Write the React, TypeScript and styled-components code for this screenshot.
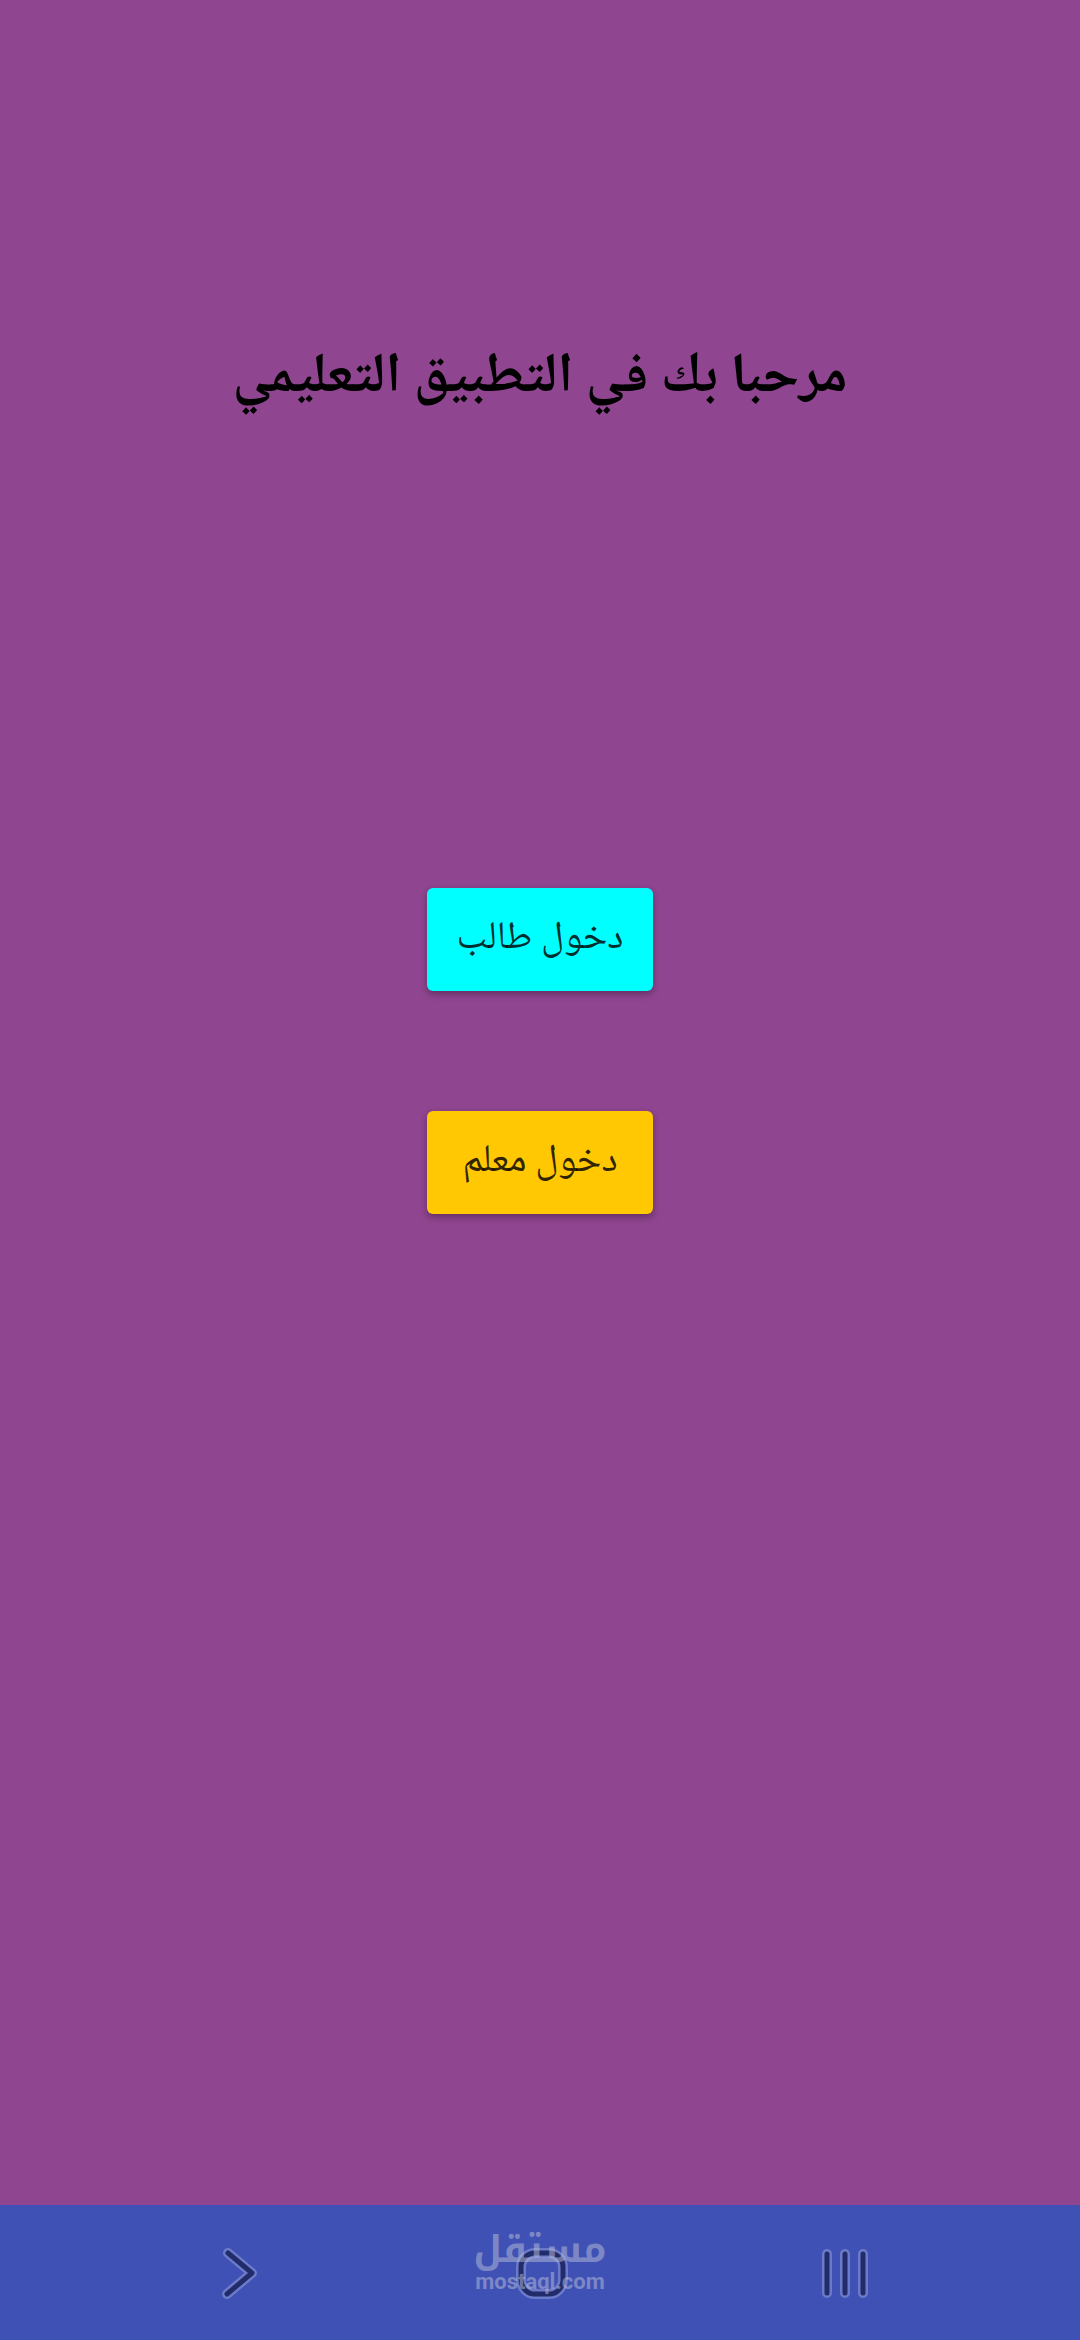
import React from "react";
import styled, { createGlobalStyle } from "styled-components";

const GlobalStyle = createGlobalStyle`
  * { box-sizing: border-box; }
  body {
    margin: 0;
    background: #8f458f;
    font-family: "Noto Naskh Arabic UI", "Noto Naskh Arabic", "DejaVu Sans", sans-serif;
  }
`;

const Screen = styled.div`
  display: flex;
  flex-direction: column;
  min-height: 100vh;
  background: #8f458f;
`;

const Main = styled.main`
  flex: 1;
  display: flex;
  flex-direction: column;
  align-items: center;
  padding: 337px 24px 48px;
`;

const Title = styled.h1`
  margin: 0;
  color: #000;
  font-size: 56px;
  font-weight: 700;
  line-height: 80px;
  text-align: center;
`;

const Actions = styled.div`
  display: flex;
  flex-direction: column;
  gap: 120px;
  margin-top: 471px;
`;

const EntryButton = styled.button<{ $color: string }>`
  min-width: 226px;
  height: 103px;
  padding: 0 28px 4px;
  border: 0;
  border-radius: 6px;
  background: ${(p) => p.$color};
  box-shadow: 0 3px 7px rgba(0, 0, 0, 0.32);
  color: rgba(0, 0, 0, 0.82);
  font-family: inherit;
  font-size: 39px;
  line-height: 60px;
  cursor: pointer;
`;

const NavBar = styled.nav`
  position: relative;
  display: flex;
  justify-content: center;
  height: 135px;
  padding: 0 84px 0 88px;
  background: #3f51b5;
`;

const NavButton = styled.button`
  flex: 1;
  display: flex;
  align-items: center;
  justify-content: center;
  padding: 0;
  border: 0;
  background: transparent;
  cursor: pointer;
`;

const Watermark = styled.div`
  position: absolute;
  left: 50%;
  top: 25px;
  display: flex;
  flex-direction: column;
  align-items: center;
  transform: translateX(-50%);
  color: #b9bdd8;
  opacity: 0.5;
  pointer-events: none;
`;

const WatermarkName = styled.span`
  font-family: "Noto Kufi Arabic", "DejaVu Sans", sans-serif;
  font-size: 37px;
  font-weight: 700;
  line-height: 40px;
`;

const WatermarkSite = styled.span`
  font-family: Roboto, sans-serif;
  font-size: 22px;
  font-weight: 700;
  line-height: 24px;
`;

const LIGHT = "#6c7bc9";
const DARK = "#232c6b";

function BackIcon() {
  const d = "M13 10 L37 30 L12 51";
  return (
    <svg width="48" height="60" viewBox="0 0 48 60" fill="none" strokeLinecap="round" strokeLinejoin="round" aria-hidden="true">
      <path d={d} stroke={LIGHT} strokeWidth="10" />
      <path d={d} stroke={DARK} strokeWidth="5" />
    </svg>
  );
}

function HomeIcon() {
  return (
    <svg width="60" height="60" viewBox="0 0 60 60" fill="none" aria-hidden="true">
      <rect x="9" y="10" width="42" height="41" rx="14" stroke={LIGHT} strokeWidth="10" />
      <rect x="9" y="10" width="42" height="41" rx="14" stroke={DARK} strokeWidth="5" />
    </svg>
  );
}

function RecentsIcon() {
  const d = "M12 11 V50 M30 11 V50 M48 11 V50";
  return (
    <svg width="60" height="60" viewBox="0 0 60 60" fill="none" strokeLinecap="round" aria-hidden="true">
      <path d={d} stroke={LIGHT} strokeWidth="10" />
      <path d={d} stroke={DARK} strokeWidth="5" />
    </svg>
  );
}

export default function App() {
  return (
    <Screen>
      <GlobalStyle />
      <Main dir="rtl" lang="ar">
        <Title>مرحبا بك في التطبيق التعليمي</Title>
        <Actions>
          <EntryButton type="button" $color="#00ffff">دخول طالب</EntryButton>
          <EntryButton type="button" $color="#ffc803">دخول معلم</EntryButton>
        </Actions>
      </Main>
      <NavBar>
        <NavButton type="button" aria-label="رجوع"><BackIcon /></NavButton>
        <NavButton type="button" aria-label="الرئيسية"><HomeIcon /></NavButton>
        <NavButton type="button" aria-label="التطبيقات الأخيرة"><RecentsIcon /></NavButton>
        <Watermark>
          <WatermarkName lang="ar" dir="rtl">مستقل</WatermarkName>
          <WatermarkSite>mostaql.com</WatermarkSite>
        </Watermark>
      </NavBar>
    </Screen>
  );
}
